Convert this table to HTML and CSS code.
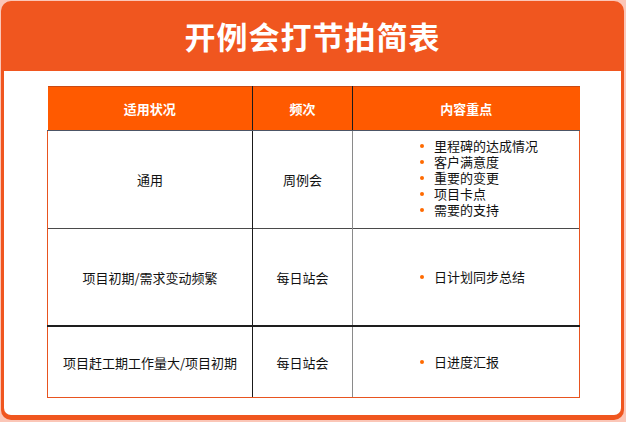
FILE: index.html
```html
<!DOCTYPE html>
<html lang="zh-CN">
<head>
<meta charset="utf-8">
<title>开例会打节拍简表</title>
<link rel="stylesheet" href="styles.css">
</head>
<body>
<div class="card">
  <h1 class="title">开例会打节拍简表</h1>
  <div class="panel">
    <table class="grid">
      <colgroup>
        <col class="c1"><col class="c2"><col class="c3">
      </colgroup>
      <thead>
        <tr class="head">
          <th class="d1">适用状况</th>
          <th class="d2">频次</th>
          <th>内容重点</th>
        </tr>
      </thead>
      <tbody>
        <tr class="r1">
          <td class="d1">通用</td>
          <td class="d2">周例会</td>
          <td class="list-cell">
            <ul class="points multi">
              <li>里程碑的达成情况</li>
              <li>客户满意度</li>
              <li>重要的变更</li>
              <li>项目卡点</li>
              <li>需要的支持</li>
            </ul>
          </td>
        </tr>
        <tr class="r2">
          <td class="d1">项目初期/需求变动频繁</td>
          <td class="d2">每日站会</td>
          <td class="list-cell">
            <ul class="points"><li>日计划同步总结</li></ul>
          </td>
        </tr>
        <tr class="r3">
          <td class="d1">项目赶工期工作量大/项目初期</td>
          <td class="d2">每日站会</td>
          <td class="list-cell">
            <ul class="points"><li>日进度汇报</li></ul>
          </td>
        </tr>
      </tbody>
    </table>
  </div>
</div>
</body>
</html>
```

FILE: styles.css
```css
html, body {
  margin: 0;
  padding: 0;
}
body {
  background: #fbc6b7;
  width: 626px;
  height: 422px;
  padding: 1px 0 0 1px;
  box-sizing: border-box;
  font-family: "Noto Sans CJK SC", "Noto Sans", sans-serif;
}
.card {
  width: 623px;
  height: 419px;
  box-sizing: border-box;
  background: #f0561f;
  border-radius: 10px;
  padding: 0 3px 5px 3px;
  display: flex;
  flex-direction: column;
}
.title {
  margin: 0;
  height: 70px;
  display: flex;
  align-items: center;
  justify-content: center;
  color: #ffffff;
  font-size: 31px;
  font-weight: 700;
  letter-spacing: 1px;
  padding-bottom: 2px;
  box-sizing: border-box;
}
.panel {
  flex: 1;
  background: #ffffff;
  border-radius: 0 0 7px 7px;
  padding: 15px 0 0 43px;
}
.grid {
  border-collapse: collapse;
  table-layout: fixed;
  width: 532px;
  font-size: 13px;
  color: #111111;
}
.c1 { width: 205px; }
.c2 { width: 100px; }
.c3 { width: 227px; }
.grid th, .grid td {
  padding: 0;
  text-align: center;
  vertical-align: middle;
}
.grid td {
  border-top: 1px solid #4a4a4a;
}
.grid .d1 { border-right: 1px solid #1a1a1a; }
.grid .d2 { border-right: 1px solid #8a8a8a; }
.grid td:first-child { border-left: 1px solid #e8541f; }
.grid td:last-child { border-right: 1px solid #e8541f; }
.head th {
  background: #ff5a00;
  color: #ffffff;
  font-weight: 700;
  height: 43px;
  border-top: 1px solid #c94a14;
  border-bottom: 1px solid #4c5566;
}
.head th.d2 { border-right: 1px solid #1a1a1a; }
.r1 td { height: 97px; }
.r2 td { height: 96px; }
.r3 td { height: 70px; border-top: 2px solid #1e1e1e; border-bottom: 1px solid #e8541f; }
.list-cell { text-align: left; }
.points {
  list-style: none;
  margin: 0;
  padding: 0 0 0 67px;
  line-height: 16px;
}
.points.multi {
  margin-top: -4px;
}
.points li {
  display: flex;
  align-items: center;
  gap: 10px;
}
.points li::before {
  content: "";
  width: 4px;
  height: 4px;
  border-radius: 50%;
  background: #ff6a00;
  flex: none;
}
```
